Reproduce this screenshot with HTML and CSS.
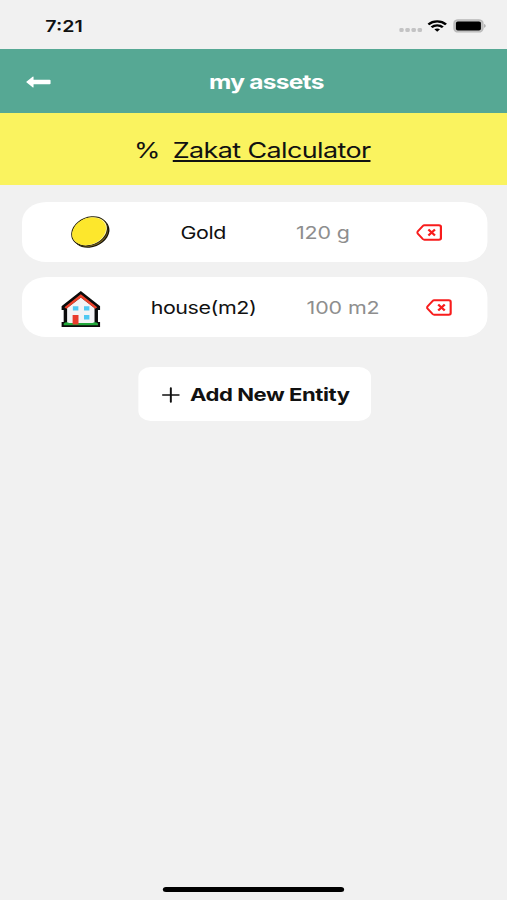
FILE: index.html
```html
<!DOCTYPE html>
<html lang="en">
  <head>
    <meta charset="UTF-8" />
    <meta name="viewport" content="width=device-width, initial-scale=1.0" />
    <title>my assets</title>
    <link rel="stylesheet" href="styles.css">
  </head>

  <body>
    <div class="screen">
      <div class="status">
        <span class="time">7:21</span>
        <div class="status-icons">
          <svg width="19" height="4" viewBox="0 0 19 4" fill="#c3c3c4">
            <rect x="0" y="0" width="3.6" height="4" rx="1.3" />
            <rect x="5" y="0" width="3.6" height="4" rx="1.3" />
            <rect x="10" y="0" width="3.6" height="4" rx="1.3" />
            <rect x="15" y="0" width="3.6" height="4" rx="1.3" />
          </svg>
          <svg class="wifi" width="16" height="12" viewBox="0 0 16 12" fill="none" stroke="#000" stroke-width="2.2">
            <path d="M0.8 4.4C4.8 0.3 11.2 0.3 15.2 4.4" />
            <path d="M3.4 7.3C6 4.7 10 4.7 12.6 7.3" />
            <path d="M5.7 9.2C7 8.2 9 8.2 10.3 9.2L8 11.7Z" fill="#000" stroke="none" />
          </svg>
          <svg class="battery" width="27" height="14" viewBox="0 0 27 14">
            <rect x="0.7" y="0.8" width="23.6" height="12.2" rx="3.4" fill="#c4c4c4" stroke="#bababa" stroke-width="1.2" />
            <rect x="2.3" y="2.4" width="20.4" height="9" rx="1.6" fill="#000" />
            <path d="M25.3 5C27 5.6 27 8.2 25.3 8.8Z" fill="#aaa" />
          </svg>
        </div>
      </div>

      <div class="header">
        <svg class="back" width="21" height="12" viewBox="0 0 21 12" fill="#fff">
          <path d="M0.3 6L5.6 0.7Q6.4 0.2 6.4 1.1V3.7H19.5Q20.3 3.7 20.3 4.5V7.5Q20.3 8.3 19.5 8.3H6.4V10.9Q6.4 11.8 5.6 11.3Z" />
        </svg>
        <h1>my assets</h1>
      </div>

      <div class="calculator">
        <span class="percent">%</span>
        <a href="#">Zakat Calculator</a>
      </div>

      <ul>
        <li>
          <svg width="32" height="34" viewBox="0 0 32 34">
            <ellipse cx="16.6" cy="18" rx="16.2" ry="13.2" transform="rotate(-45 16.6 18)" fill="#17130a" />
            <ellipse cx="16" cy="17.4" rx="15.6" ry="12.9" transform="rotate(-45 16 17.4)" fill="#8d7420" />
            <ellipse cx="15.2" cy="16.3" rx="16" ry="13" transform="rotate(-45 15.2 16.3)" fill="#fff6b0" stroke="#28230c" />
            <ellipse cx="14.7" cy="16.3" rx="15.2" ry="12.3" transform="rotate(-45 14.7 16.3)" fill="#fde72c" />
          </svg>
          <span>Gold</span>
          <span class="amount">120 g</span>
          <svg class="delete" width="21" height="17" viewBox="0.7 0.5 22 17" preserveAspectRatio="none">
            <path d="M7.6 1.8H20Q21.7 1.8 21.7 3.5V14.5Q21.7 16.2 20 16.2H7.6Q6.8 16.2 6.2 15.5L1.8 10Q1 9 1.8 8L6.2 2.5Q6.8 1.8 7.6 1.8Z" />
            <path d="M11 6L16.6 12M16.6 6L11 12" />
          </svg>
        </li>
        <li>
          <svg class="house" width="32" height="38" viewBox="0 0 32 38">
            <path d="M16 1L0.2 16.3V20H2V32H0.2V37H31.8V32H30V20H31.8V16.3Z" fill="#0b0b0b" />
            <path d="M4.8 18L16 7.5L27.2 18V34H4.8Z" fill="#f3f3f5" />
            <path d="M3.4 18L16 5.9L28.6 18" fill="none" stroke="#ee432c" stroke-width="2.3" />
            <path d="M2 33.5Q4 31.5 6.5 33H25.5Q28 31.5 30 33.5V35.3H2Z" fill="#22a83b" />
            <path d="M9.3 25H14.1V34.5H9.3Z" fill="#e93b2c" />
            <path d="M9.5 16.2H14V20.5H9.5ZM18.6 16.2H23V20.5H18.6ZM18.6 25H23V29.4H18.6Z" fill="#50c8f2" />
          </svg>
          <span>house(m2)</span>
          <span class="amount">100 m2</span>
          <svg class="delete" width="21" height="17" viewBox="0.7 0.5 22 17" preserveAspectRatio="none">
            <path d="M7.6 1.8H20Q21.7 1.8 21.7 3.5V14.5Q21.7 16.2 20 16.2H7.6Q6.8 16.2 6.2 15.5L1.8 10Q1 9 1.8 8L6.2 2.5Q6.8 1.8 7.6 1.8Z" />
            <path d="M11 6L16.6 12M16.6 6L11 12" />
          </svg>
        </li>
      </ul>

      <button class="add">
        <svg width="15" height="16" viewBox="0 0 15 16" fill="none" stroke="#111" stroke-width="1.6" stroke-linecap="round">
          <path d="M1 8H14M7.5 1V15" />
        </svg>
        <span>Add New Entity</span>
      </button>

      <div class="home-bar"></div>
    </div>
  </body>
</html>
```
FILE: styles.css
```css
body {
  margin: 0;
  overflow: hidden;
  background: #f1f1f1;
}
.screen {
  width: 414px;
  height: 900px;
  display: flex;
  flex-direction: column;
  align-items: center;
  transform: scaleX(1.22464);
  transform-origin: 0 0;
  font-family: Inter, "Liberation Sans", sans-serif;
  color: #111;
}
.status {
  width: 100%;
  height: 49px;
  box-sizing: border-box;
  padding: 0 17px 0 37px;
  display: flex;
  justify-content: space-between;
}
.time {
  margin-top: 16px;
  font-size: 16px;
  line-height: 20px;
  font-weight: 600;
}
.status-icons {
  display: flex;
  align-items: flex-end;
  height: 33px;
}
.status-icons svg:first-child {
  margin-bottom: 1px;
}
.wifi {
  margin: 0 5px 1px 4px;
}
.header {
  width: 100%;
  height: 64px;
  box-sizing: border-box;
  padding-top: 1px;
  display: grid;
  grid-template-columns: 1fr auto 1fr;
  align-items: center;
  background: #56a894;
  color: #fff;
}
.back {
  margin-left: 21px;
}
h1 {
  grid-column: 2;
  margin: 0 0 0 21px;
  font-size: 20px;
  font-weight: 700;
  letter-spacing: -0.6px;
}
.calculator {
  width: 100%;
  height: 72px;
  box-sizing: border-box;
  padding: 1px 2px 0 0;
  display: flex;
  align-items: center;
  justify-content: center;
  gap: 10px;
  background: #faf35f;
  font-size: 22px;
}
.calculator a {
  color: #111;
  letter-spacing: -0.5px;
  text-underline-offset: 2px;
  text-decoration-thickness: 1.5px;
  text-decoration-skip-ink: none;
}
ul {
  width: 380px;
  margin: 17px 0 0 1px;
  padding: 0;
  list-style: none;
}
li {
  height: 60px;
  box-sizing: border-box;
  margin-bottom: 15px;
  padding: 0 8px 0 12px;
  display: flex;
  align-items: center;
  justify-content: space-around;
  background: #fff;
  border-radius: 20px;
  font-size: 17.5px;
  letter-spacing: -0.35px;
}
.house {
  margin-top: 4px;
}
.amount {
  color: #8e8e8e;
  letter-spacing: -0.1px;
}
.delete {
  margin-left: -3px;
  fill: none;
  stroke: #f81c1c;
  stroke-width: 1.9;
}
.add {
  width: 190px;
  height: 54px;
  margin: 15px 0 0 1px;
  padding: 1px 0 0 2px;
  display: flex;
  align-items: center;
  justify-content: center;
  gap: 8.5px;
  border: none;
  border-radius: 10px;
  background: #fff;
  color: #111;
  font-family: inherit;
  font-size: 18px;
  font-weight: 700;
  letter-spacing: -0.35px;
}
.home-bar {
  width: 148px;
  height: 5px;
  margin: auto 0 8px;
  border-radius: 3px;
  background: #000;
}
```
